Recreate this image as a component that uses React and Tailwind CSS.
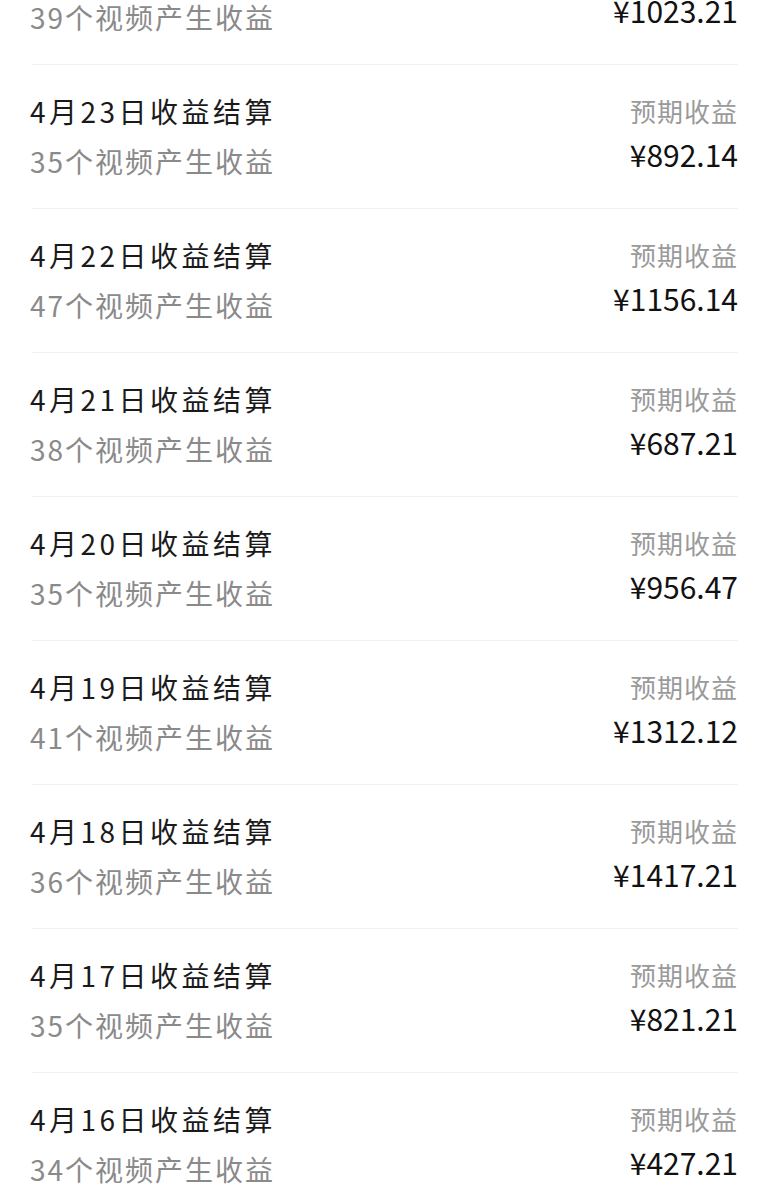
import React from "react";

const rows = [
  { d: "4月24日收益结算", n: "39个视频产生收益", a: "¥1023.21" },
  { d: "4月23日收益结算", n: "35个视频产生收益", a: "¥892.14" },
  { d: "4月22日收益结算", n: "47个视频产生收益", a: "¥1156.14" },
  { d: "4月21日收益结算", n: "38个视频产生收益", a: "¥687.21" },
  { d: "4月20日收益结算", n: "35个视频产生收益", a: "¥956.47" },
  { d: "4月19日收益结算", n: "41个视频产生收益", a: "¥1312.12" },
  { d: "4月18日收益结算", n: "36个视频产生收益", a: "¥1417.21" },
  { d: "4月17日收益结算", n: "35个视频产生收益", a: "¥821.21" },
  { d: "4月16日收益结算", n: "34个视频产生收益", a: "¥427.21" },
];

export default function App() {
  return (
    <div
      className="w-[770px] h-[1200px] overflow-hidden bg-white"
      style={{ fontFamily: '"Noto Sans CJK SC", "Noto Sans", sans-serif' }}
    >
      <div className="-mt-[80px]">
        {rows.map((r, i) => (
          <div key={i}>
            <div className="h-px mx-[32px] bg-[#f0f0f0]" />
            <div className="h-[143px] flex justify-between items-start pl-[30px] pr-[32px] pt-[28px]">
              <div className="flex flex-col">
                <div className="text-[28px] leading-[36px] text-[#1a1a1a] tracking-[3.5px]">{r.d}</div>
                <div className="mt-[14px] text-[28px] leading-[36px] text-[#8a8a8a] tracking-[2px]">{r.n}</div>
              </div>
              <div className="flex flex-col items-end">
                <div className="text-[26px] leading-[36px] text-[#9a9a9a] tracking-[1px]">预期收益</div>
                <div className="mt-[7px] text-[30px] leading-[36px] text-[#111111]">{r.a}</div>
              </div>
            </div>
          </div>
        ))}
      </div>
    </div>
  );
}
